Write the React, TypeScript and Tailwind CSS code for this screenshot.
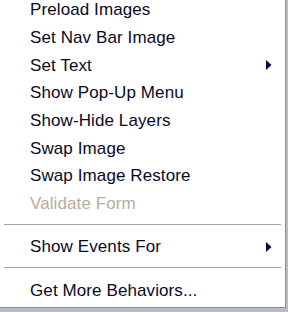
import React from "react";

type Item = { label: string; sub?: boolean; disabled?: boolean };

const top: Item[] = [
  { label: "Preload Images" },
  { label: "Set Nav Bar Image" },
  { label: "Set Text", sub: true },
  { label: "Show Pop-Up Menu" },
  { label: "Show-Hide Layers" },
  { label: "Swap Image" },
  { label: "Swap Image Restore" },
  { label: "Validate Form", disabled: true },
];

function Arrow() {
  return (
    <svg width="6" height="10" viewBox="0 0 6 10" className="mr-[13px]">
      <path d="M0 0 L5.5 5 L0 10 Z" fill="#0c0c3c" />
    </svg>
  );
}

function Row({ item }: { item: Item }) {
  return (
    <div
      className={`flex h-[27.7px] items-center justify-between pl-[30px] ${
        item.disabled ? "text-[#b4ae9c]" : "text-[#0a0a1e]"
      }`}
    >
      <span>{item.label}</span>
      {item.sub && <Arrow />}
    </div>
  );
}

function Sep() {
  return (
    <div className="flex h-[15.5px] items-center px-[4px]">
      <div className="h-[2px] w-full border-t border-[#a4a4a4] bg-white" />
    </div>
  );
}

export default function App() {
  return (
    <div className="h-[312px] w-[288px] overflow-hidden bg-[#b8bcc4]">
      <div
        className="h-[308px] w-[286px] overflow-hidden border-r border-b border-[#8e8e8e] bg-white text-[17px] leading-none tracking-[0.1px]"
        style={{ fontFamily: '"Liberation Sans", Arial, sans-serif' }}
      >
        <div className="-mt-[4px]">
          {top.map((it) => (
            <Row key={it.label} item={it} />
          ))}
          <Sep />
          <Row item={{ label: "Show Events For", sub: true }} />
          <Sep />
          <Row item={{ label: "Get More Behaviors..." }} />
        </div>
      </div>
    </div>
  );
}
